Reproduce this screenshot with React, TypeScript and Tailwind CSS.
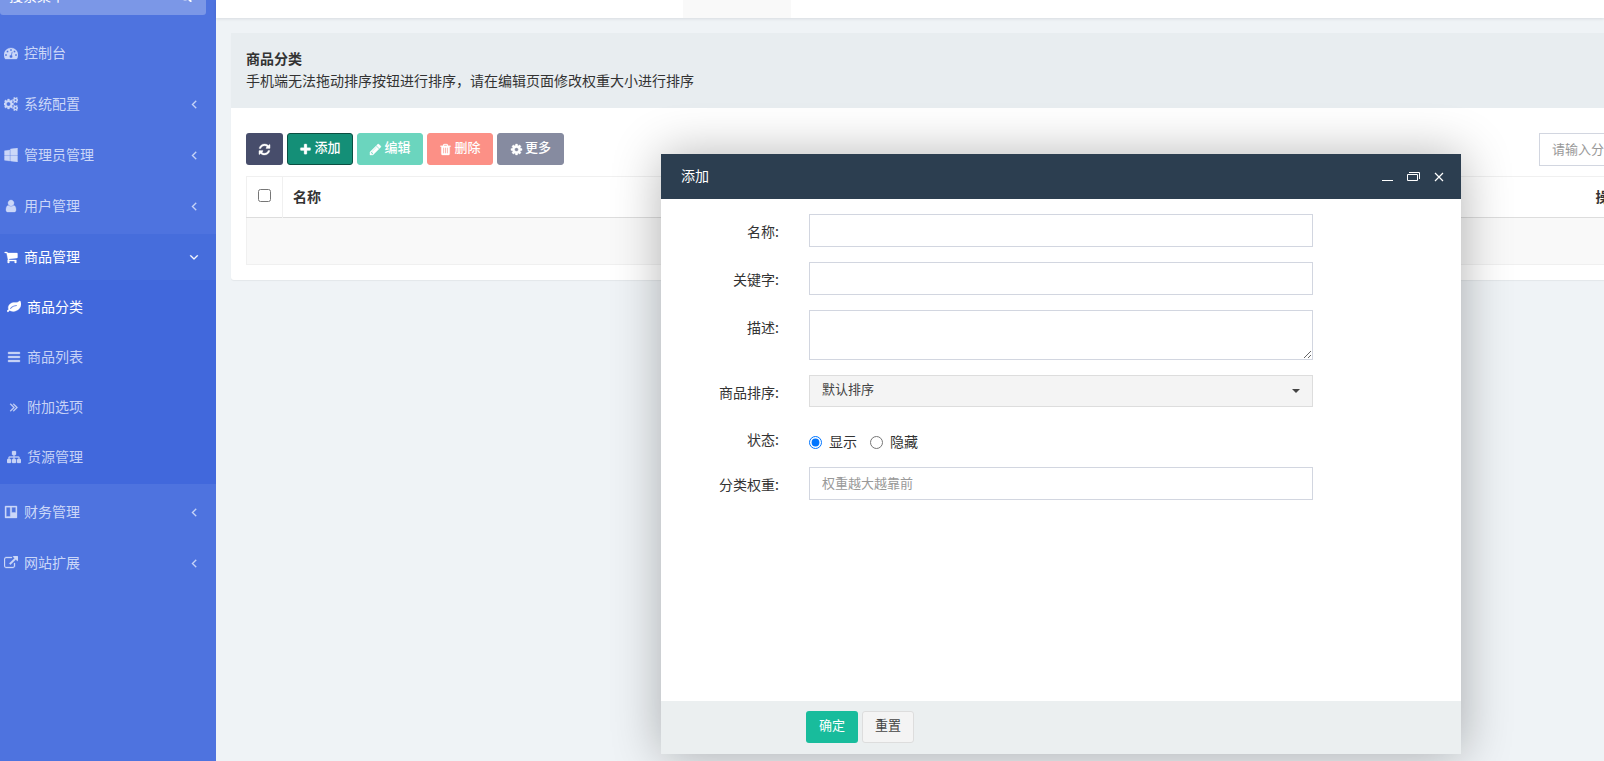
import type { ReactNode } from "react";

const GEAR_SMALL =
  "v140q0 16-149 31-12 27-30 52 51 113 51 138 0 4-4 7-122 71-124 71-8 0-46-47t-52-68q-20 2-30 2t-30-2q-14 21-52 68t-46 47q-2 0-124-71-4-3-4-7 0-25 51-138-18-25-30-52-149-15-149-31v-140q0-16 149-31 13-29 30-52-51-113-51-138 0-4 4-7 4-2 35-20t59-34 30-16q8 0 46 46.5t52 67.5q20-2 30-2t30 2q51-71 92-112l6-2q4 0 124 70 4 3 4 7 0 25-51 138 17 23 30 52 149 15 149 31z";

const PATHS = {
  dashboard:
    "M384 1152q0-53-37.5-90.5t-90.5-37.5-90.5 37.5-37.5 90.5 37.5 90.5 90.5 37.5 90.5-37.5 37.5-90.5zm192-448q0-53-37.5-90.5t-90.5-37.5-90.5 37.5-37.5 90.5 37.5 90.5 90.5 37.5 90.5-37.5 37.5-90.5zm428 481l101-382q6-26-7.5-48.5t-38.5-29.5-48 6.5-30 39.5l-101 382q-60 5-107 43.500t-63 98.500q-20 77 20 146t117 89 146-20 89-117q16-60-6-117t-72-91zm660-33q0-53-37.5-90.5t-90.5-37.5-90.5 37.5-37.5 90.5 37.5 90.5 90.5 37.5 90.5-37.5 37.5-90.5zm-640-640q0-53-37.5-90.5t-90.5-37.5-90.5 37.5-37.5 90.5 37.5 90.5 90.5 37.5 90.5-37.5 37.5-90.5zm448 192q0-53-37.5-90.5t-90.5-37.5-90.5 37.5-37.5 90.5 37.5 90.5 90.5 37.5 90.5-37.5 37.5-90.5zm320 448q0 261-141 483-19 29-54 29h-1402q-35 0-54-29-141-221-141-483 0-182 71-348t191-286 286-191 348-71 348 71 286 191 191 286 71 348z",
  cogs:
    "M832 896q0-106-75-181t-181-75-181 75-75 181 75 181 181 75 181-75 75-181zm768 512q0-52-38-90t-90-38-90 38-38 90q0 53 37.5 90.5t90.5 37.5 90.5-37.5 37.5-90.5zm0-1024q0-52-38-90t-90-38-90 38-38 90q0 53 37.5 90.5t90.5 37.5 90.5-37.5 37.5-90.5zm-384 421v185q0 10-7 19.5t-16 10.5l-155 24q-11 35-32 76 34 48 90 115 7 11 7 20 0 12-7 19-23 30-82.5 89.5t-78.500 59.500q-11 0-21-7l-115-90q-37 19-77 31-11 108-23 155-7 24-30 24h-186q-11 0-20-7.5t-10-17.5l-23-153q-34-10-75-31l-118 89q-7 7-20 7-11 0-21-8-144-133-144-160 0-9 7-19 10-14 41-53t47-61q-23-44-35-82l-152-24q-10-1-17-9.5t-7-19.5v-185q0-10 7-19.5t16-10.500l155-24q11-35 32-76-34-48-90-115-7-11-7-20 0-12 7-20 22-30 82-89t79-59q11 0 21 7l115 90q34-18 77-32 11-108 23-154 7-24 30-24h186q11 0 20 7.5t10 17.5l23 153q34 10 75 31l118-89q8-7 20-7 11 0 21 8 144 133 144 160 0 8-7 19-12 16-42 54t-45 60q23 48 34 82l152 23q10 2 17 10.5t7 19.5zm640 533" +
    GEAR_SMALL +
    "m0-1024" +
    GEAR_SMALL,
  windows:
    "M746 1006v651l-682-94v-557h682zm0-743v659h-682v-565zm982 743v786l-907-125v-661h907zm0-1006v922h-907v-797z",
  user:
    "M1536 1399q0 109-62.5 187t-150.500 78h-854q-88 0-150.500-78t-62.500-187q0-85 8.500-160.500t31.500-152 58.500-131 94-89 134.500-34.500q131 128 313 128t313-128q76 0 134.500 34.500t94 89 58.500 131 31.500 152 8.500 160.500zm-256-887q0 159-112.500 271.500t-271.500 112.500-271.500-112.500-112.500-271.500 112.500-271.500 271.500-112.500 271.500 112.500 112.500 271.500z",
  cart:
    "M704 1536q0 52-38 90t-90 38-90-38-38-90 38-90 90-38 90 38 38 90zm896 0q0 52-38 90t-90 38-90-38-38-90 38-90 90-38 90 38 38 90zm128-1088v512q0 24-16.5 42.5t-40.5 21.5l-1044 122q13 60 13 70 0 16-24 64h920q26 0 45 19t19 45-19 45-45 19h-1024q-26 0-45-19t-19-45q0-11 8-31.5t16-36 21.5-40 15.5-29.5l-177-823h-204q-26 0-45-19t-19-45 19-45 45-19h256q16 0 28.5 6.5t19.5 15.5 13 24.5 8 26 5.5 29.5 4.5 26h1201q26 0 45 19t19 45z",
  leaf:
    "M1280 704q0-26-19-45t-45-19q-172 0-318 49.5t-259.500 134-235.500 219.500q-19 21-19 45 0 26 19 45t45 19q24 0 45-19 27-24 74-71t67-66q137-124 268.500-176t313.500-52q26 0 45-19t19-45zm512-198q0 95-20 193-46 224-184.500 383t-357.500 268q-214 108-438 108-148 0-286-47-15-5-88-42t-96-37q-16 0-39.500 32t-45 70-52.500 70-60 32q-43 0-63.500-17.500t-45.500-59.500q-2-4-6-11t-5.500-10-3-9.500-1.500-13.500q0-35 31-73.500t68-65.500 68-56 31-48q0-4-14-38t-16-44q-9-51-9-104 0-115 43.500-220t119-184.500 170.500-139 204-95.500q55-18 145-25.500t179.500-9 178.500-6 163.500-24 113.500-56.500l29.500-29.500 29.500-28 27-20 36.500-16 43.500-4.500q39 0 70.500 46t47.500 112 24 124 8 96z",
  bars:
    "M1664 1344v128q0 26-19 45t-45 19h-1408q-26 0-45-19t-19-45v-128q0-26 19-45t45-19h1408q26 0 45 19t19 45zm0-512v128q0 26-19 45t-45 19h-1408q-26 0-45-19t-19-45v-128q0-26 19-45t45-19h1408q26 0 45 19t19 45zm0-512v128q0 26-19 45t-45 19h-1408q-26 0-45-19t-19-45v-128q0-26 19-45t45-19h1408q26 0 45 19t19 45z",
  doubleRight:
    "M979 960q0 13-10 23l-466 466q-10 10-23 10t-23-10l-50-50q-10-10-10-23t10-23l393-393-393-393q-10-10-10-23t10-23l50-50q10-10 23-10t23 10l466 466q10 10 10 23zm384 0q0 13-10 23l-466 466q-10 10-23 10t-23-10l-50-50q-10-10-10-23t10-23l393-393-393-393q-10-10-10-23t10-23l50-50q10-10 23-10t23 10l466 466q10 10 10 23z",
  sitemap:
    "M1792 1248v320q0 40-28 68t-68 28h-320q-40 0-68-28t-28-68v-320q0-40 28-68t68-28h96v-192h-512v192h96q40 0 68 28t28 68v320q0 40-28 68t-68 28h-320q-40 0-68-28t-28-68v-320q0-40 28-68t68-28h96v-192h-512v192h96q40 0 68 28t28 68v320q0 40-28 68t-68 28h-320q-40 0-68-28t-28-68v-320q0-40 28-68t68-28h96v-192q0-52 38-90t90-38h512v-192h-96q-40 0-68-28t-28-68v-320q0-40 28-68t68-28h320q40 0 68 28t28 68v320q0 40-28 68t-68 28h-96v192h512q52 0 90 38t38 90v192h96q40 0 68 28t28 68z",
  trello:
    "M192 128h1408q64 0 64 64v1408q0 64-64 64h-1408q-64 0-64-64v-1408q0-64 64-64zM320 288q-32 0-32 32v1120q0 32 32 32h448q32 0 32-32v-1120q0-32-32-32zM1024 288q-32 0-32 32v608q0 32 32 32h448q32 0 32-32v-608q0-32-32-32z",
  externalLink:
    "M1408 928v320q0 119-84.5 203.500t-203.500 84.500h-832q-119 0-203.500-84.500t-84.500-203.500v-832q0-119 84.500-203.500t203.500-84.500h704q14 0 23 9t9 23v64q0 14-9 23t-23 9h-704q-66 0-113 47t-47 113v832q0 66 47 113t113 47h832q66 0 113-47t47-113v-320q0-14 9-23t23-9h64q14 0 23 9t9 23zm384-864v512q0 26-19 45t-45 19-45-19l-176-176-652 652q-10 10-23 10t-23-10l-114-114q-10-10-10-23t10-23l652-652-176-176q-19-19-19-45t19-45 45-19h512q26 0 45 19t19 45z",
  angleLeft:
    "M1203 544q0 13-10 23l-393 393 393 393q10 10 10 23t-10 23l-50 50q-10 10-23 10t-23-10l-466-466q-10-10-10-23t10-23l466-466q10-10 23-10t23 10l50 50q10 10 10 23z",
  angleDown:
    "M1395 736q0 13-10 23l-466 466q-10 10-23 10t-23-10l-466-466q-10-10-10-23t10-23l50-50q10-10 23-10t23 10l393 393 393-393q10-10 23-10t23 10l50 50q10 10 10 23z",
  search:
    "M1216 832q0-185-131.500-316.500t-316.500-131.500-316.500 131.500-131.500 316.500 131.500 316.500 316.500 131.500 316.500-131.500 131.500-316.500zm512 832q0 52-38 90t-90 38q-54 0-90-38l-343-342q-179 124-399 124-143 0-273.500-55.500t-225-150-150-225-55.500-273.500 55.500-273.500 150-225 225-150 273.500-55.500 273.500 55.500 225 150 150 225 55.500 273.500q0 220-124 399l343 343q37 37 37 90z",
  refresh:
    "M1639 1056q0 5-1 7-64 268-268 434.500t-478 166.500q-146 0-282.500-55t-243.500-157l-129 129q-19 19-45 19t-45-19-19-45v-448q0-26 19-45t45-19h448q26 0 45 19t19 45-19 45l-137 137q71 66 161 102t187 36q134 0 250-65t186-179q11-17 53-117 8-23 30-23h192q13 0 22.500 9.500t9.500 22.500zm25-800v448q0 26-19 45t-45 19h-448q-26 0-45-19t-19-45 19-45l138-138q-148-137-349-137-134 0-250 65t-186 179q-11 17-53 117-8 23-30 23h-199q-13 0-22.500-9.500t-9.500-22.500v-7q65-268 270-434.500t480-166.500q146 0 284 55.500t245 156.500l130-129q19-19 45-19t45 19 19 45z",
  plus:
    "M1600 736v192q0 40-28 68t-68 28h-416v416q0 40-28 68t-68 28h-192q-40 0-68-28t-28-68v-416h-416q-40 0-68-28t-28-68v-192q0-40 28-68t68-28h416v-416q0-40 28-68t68-28h192q40 0 68 28t28 68v416h416q40 0 68 28t28 68z",
  pencil:
    "M491 1536l91-91-235-235-91 91v107h128v128h107zm523-928q0-22-22-22-10 0-17 7l-542 542q-7 7-7 17 0 22 22 22 10 0 17-7l542-542q7-7 7-17zm-54-192l416 416-832 832h-416v-416zm683 96q0 53-37 90l-166 166-416-416 166-165q36-38 90-38 53 0 91 38l235 234q37 39 37 91z",
  trash:
    "M704 1376v-704q0-14-9-23t-23-9h-64q-14 0-23 9t-9 23v704q0 14 9 23t23 9h64q14 0 23-9t9-23zm256 0v-704q0-14-9-23t-23-9h-64q-14 0-23 9t-9 23v704q0 14 9 23t23 9h64q14 0 23-9t9-23zm256 0v-704q0-14-9-23t-23-9h-64q-14 0-23 9t-9 23v704q0 14 9 23t23 9h64q14 0 23-9t9-23zm-544-992h448l-48-117q-7-9-17-11h-317q-10 2-17 11zm928 32v64q0 14-9 23t-23 9h-96v948q0 83-47 143.500t-113 60.500h-832q-66 0-113-58.500t-47-141.500v-952h-96q-14 0-23-9t-9-23v-64q0-14 9-23t23-9h309l70-167q15-37 54-63t79-26h320q40 0 79 26t54 63l70 167h309q14 0 23 9t9 23z",
  cog:
    "M1152 896q0-106-75-181t-181-75-181 75-75 181 75 181 181 75 181-75 75-181zm512-109v222q0 12-8 23t-20 13l-185 28q-19 54-39 91 35 50 107 138 10 12 10 25t-9 23q-27 37-99 108t-94 71q-12 0-26-9l-138-108q-44 23-91 38-16 136-29 186-7 28-36 28h-222q-14 0-24.500-8.500t-11.500-21.500l-28-184q-49-16-90-37l-141 107q-10 9-25 9-14 0-25-11-126-114-165-168-7-10-7-23 0-12 8-23 15-21 51-66.500t54-70.500q-27-50-41-99l-183-27q-13-2-21-12.500t-8-23.500v-222q0-12 8-23t19-13l186-28q14-46 39-92-40-57-107-138-10-12-10-24 0-10 9-23 26-36 98.500-107.500t94.500-71.500q13 0 26 10l138 107q44-23 91-38 16-136 29-186 7-28 36-28h222q14 0 24.500 8.500t11.500 21.500l28 184q49 16 90 37l142-107q9-9 24-9 13 0 25 10 129 119 165 170 7 8 7 22 0 12-8 23-15 21-51 66.500t-54 70.500q26 50 41 98l183 28q13 2 21 12.500t8 23.500z",
};

type IconName = keyof typeof PATHS;

function Icon({ name, className = "size-3.5" }: { name: IconName; className?: string }) {
  return (
    <svg
      viewBox="0 0 1792 1792"
      className={`shrink-0 ${className}`}
      fill="currentColor"
      stroke="currentColor"
      strokeWidth="40"
      fillRule={name === "trello" ? "evenodd" : "nonzero"}
      aria-hidden="true"
    >
      <path d={PATHS[name]} />
    </svg>
  );
}

function NavItem({ icon, label, arrow, open = false }: { icon: IconName; label: string; arrow?: IconName; open?: boolean }) {
  return (
    <a
      href="#"
      className={`flex h-[46px] items-center pl-1 pr-[15px] ${open ? "bg-[#466ddc] text-white" : "text-[#cbd7f8]"}`}
    >
      <Icon name={icon} />
      <span className="ml-1.5 flex-1 pb-0.5">{label}</span>
      {arrow && <Icon name={arrow} />}
    </a>
  );
}

function SubItem({ icon, label, active = false }: { icon: IconName; label: string; active?: boolean }) {
  return (
    <a href="#" className={`flex h-[50px] items-center gap-1.5 pl-[7px] ${active ? "text-white" : "text-[#c6d2f6]"}`}>
      <Icon name={icon} />
      <span className="pb-0.5">{label}</span>
    </a>
  );
}

function ToolButton({ icon, label, className }: { icon: IconName; label: string; className: string }) {
  return (
    <button className={`flex h-8 items-center justify-center gap-0.5 rounded-[3px] border text-[13px] font-medium text-white ${className}`}>
      <Icon name={icon} className="size-[13px]" />
      <span className="pb-[3px]">{label}</span>
    </button>
  );
}

function Field({ label, id, children }: { label: string; id?: string; children: ReactNode }) {
  const text = "w-[118px] shrink-0 pt-[7px] text-right leading-5";
  return (
    <div className="flex gap-[30px]">
      {id ? (
        <label htmlFor={id} className={text}>
          {label}
        </label>
      ) : (
        <span className={text}>{label}</span>
      )}
      <div className="relative flex min-h-[30px] w-[504px] items-center">{children}</div>
    </div>
  );
}

const inputClass = "block h-[33px] w-full border border-[#d2d6e0] bg-white px-3 pb-[3px] text-[13px] outline-none placeholder:text-[#999]";

function Sidebar() {
  return (
    <nav className="w-[216px] shrink-0 bg-[#4e73df]">
      <form className="-mt-5 mr-2.5 flex h-[35px] items-center rounded-[3px] bg-[#7b97e7] pb-1 pl-[9px] pr-3.5 text-white">
        <input aria-label="搜索菜单" placeholder="搜索菜单" className="min-w-0 flex-1 bg-transparent pb-0.5 outline-none placeholder:text-white" />
        <button type="button" aria-label="搜索">
          <Icon name="search" className="size-3" />
        </button>
      </form>
      <div className="flex flex-col gap-[5px] pt-[15px]">
        <NavItem icon="dashboard" label="控制台" />
        <NavItem icon="cogs" label="系统配置" arrow="angleLeft" />
        <NavItem icon="windows" label="管理员管理" arrow="angleLeft" />
        <NavItem icon="user" label="用户管理" arrow="angleLeft" />
        <div>
          <NavItem icon="cart" label="商品管理" arrow="angleDown" open />
          <div className="bg-[#4168dc] py-0.5">
            <SubItem icon="leaf" label="商品分类" active />
            <SubItem icon="bars" label="商品列表" />
            <SubItem icon="doubleRight" label="附加选项" />
            <SubItem icon="sitemap" label="货源管理" />
          </div>
        </div>
        <NavItem icon="trello" label="财务管理" arrow="angleLeft" />
        <NavItem icon="externalLink" label="网站扩展" arrow="angleLeft" />
      </div>
    </nav>
  );
}

function CategoryPanel() {
  return (
    <section className="-mr-32 ml-[15px] mt-[15px] rounded-[3px] bg-white shadow-[0_1px_1px_rgba(0,0,0,0.05)]">
      <header className="h-[75px] bg-[#e8edf0] px-[15px] pt-3.5 leading-[22px]">
        <h1 className="font-bold">商品分类</h1>
        <p>手机端无法拖动排序按钮进行排序，请在编辑页面修改权重大小进行排序</p>
      </header>
      <div className="px-[15px] pb-[15px] pt-[25px]">
        <div className="mb-2.5 flex gap-1">
          <button aria-label="刷新" className="flex h-8 w-[37px] items-center justify-center rounded-[3px] bg-[#474d6b] text-white">
            <Icon name="refresh" className="size-[13px]" />
          </button>
          <ToolButton icon="plus" label="添加" className="w-[66px] border-[#0b4f42] bg-[#148f77]" />
          <ToolButton icon="pencil" label="编辑" className="w-[66px] border-[#6bd5be] bg-[#6bd5be]" />
          <ToolButton icon="trash" label="删除" className="w-[66px] border-[#fc9086] bg-[#fc9086]" />
          <ToolButton icon="cog" label="更多" className="w-[67px] border-[#868ba0] bg-[#868ba0]" />
          <input
            aria-label="搜索分类"
            placeholder="请输入分类名称"
            className="ml-auto h-[33px] w-[178px] border border-[#d2d6e0] px-3 pb-[3px] text-[13px] outline-none placeholder:text-[#999]"
          />
        </div>
        <table className="w-full border-collapse border border-[#f0f0f0]">
          <thead>
            <tr className="h-[41px] border-b border-b-[#ddd]">
              <th className="w-9 border-r border-r-[#f0f0f0] pb-1">
                <input type="checkbox" aria-label="全选" className="mx-auto block size-[13px]" />
              </th>
              <th className="px-2.5 pb-0.5 text-left font-bold">名称</th>
              <th className="w-[131px] px-2.5 pb-0.5 text-left font-bold">操作</th>
            </tr>
          </thead>
          <tbody>
            <tr className="h-[47px] bg-[#f9f9f9]">
              <td colSpan={3} />
            </tr>
          </tbody>
        </table>
      </div>
    </section>
  );
}

function AddDialog() {
  return (
    <div
      role="dialog"
      aria-label="添加"
      className="absolute left-[661px] top-[154px] flex h-[600px] w-[800px] flex-col rounded-[2px] bg-white shadow-[1px_1px_50px_rgba(0,0,0,0.3)]"
    >
      <header className="flex h-[45px] items-center bg-[#2c3e50] pb-0.5 pl-5 pr-[15px] text-white">
        <h2 className="flex-1 pb-0.5">添加</h2>
        <div className="flex gap-3">
          <button aria-label="最小化">
            <svg viewBox="0 0 14 14" className="size-3.5" stroke="currentColor" fill="none">
              <path d="M2 11.500h11" />
            </svg>
          </button>
          <button aria-label="还原">
            <svg viewBox="0 0 14 14" className="size-3.5" stroke="currentColor" fill="none">
              <path d="M1.500 5.500h10v6h-10zM3 3.500h10.500v6.500" />
            </svg>
          </button>
          <button aria-label="关闭">
            <svg viewBox="0 0 14 14" className="size-3.5" stroke="currentColor" strokeWidth="1.2" fill="none">
              <path d="M3 4l8 8M11 4l-8 8" />
            </svg>
          </button>
        </div>
      </header>
      <form className="flex flex-1 flex-col gap-[15px] pt-[15px]">
        <Field label="名称:" id="name">
          <input id="name" className={inputClass} />
        </Field>
        <Field label="关键字:" id="keywords">
          <input id="keywords" className={inputClass} />
        </Field>
        <Field label="描述:" id="description">
          <textarea id="description" className="block h-[50px] w-full resize border border-[#d2d6e0] px-3 py-1.5 text-[13px] outline-none" />
        </Field>
        <Field label="商品排序:" id="sort">
          <select id="sort" className="h-8 w-full appearance-none border border-[#ddd] bg-[#f4f4f4] px-3 pb-[3px] text-[13px] text-[#444] outline-none">
            <option>默认排序</option>
          </select>
          <svg viewBox="0 0 8 4" className="pointer-events-none absolute right-[13px] top-3.5 h-1 w-2" fill="#444">
            <path d="M0 0h8L4 4z" />
          </svg>
        </Field>
        <Field label="状态:">
          <div className="flex gap-[13px] pt-[7px]">
            <label className="flex gap-[7px] leading-5">
              <input type="radio" name="status" defaultChecked className="mt-[5px] size-[13px]" />
              显示
            </label>
            <label className="flex gap-[7px] leading-5">
              <input type="radio" name="status" className="mt-[5px] size-[13px]" />
              隐藏
            </label>
          </div>
        </Field>
        <Field label="分类权重:" id="weight">
          <input id="weight" placeholder="权重越大越靠前" className={inputClass} />
        </Field>
      </form>
      <footer className="flex h-[53px] gap-1 bg-[#ebeff0] pl-[145px] pt-2.5 text-[13px]">
        <button className="h-8 w-[52px] rounded-[3px] bg-[#18bc9c] pb-[3px] text-white">确定</button>
        <button className="h-8 w-[52px] rounded-[3px] border border-[#ddd] bg-[#f4f4f4] pb-[3px] text-[#444]">重置</button>
      </footer>
    </div>
  );
}

export default function App() {
  return (
    <div className="relative flex min-h-screen overflow-hidden bg-[#eff3f6] font-['Noto_Sans_CJK_SC',sans-serif] text-sm text-[#333]">
      <Sidebar />
      <main className="min-w-0 flex-1">
        <div className="h-[18px] bg-white pl-[467px] shadow-[0_1px_3px_rgba(0,21,41,0.1)]">
          <div className="h-full w-[108px] bg-[#f9f9f9]" />
        </div>
        <CategoryPanel />
      </main>
      <AddDialog />
    </div>
  );
}
